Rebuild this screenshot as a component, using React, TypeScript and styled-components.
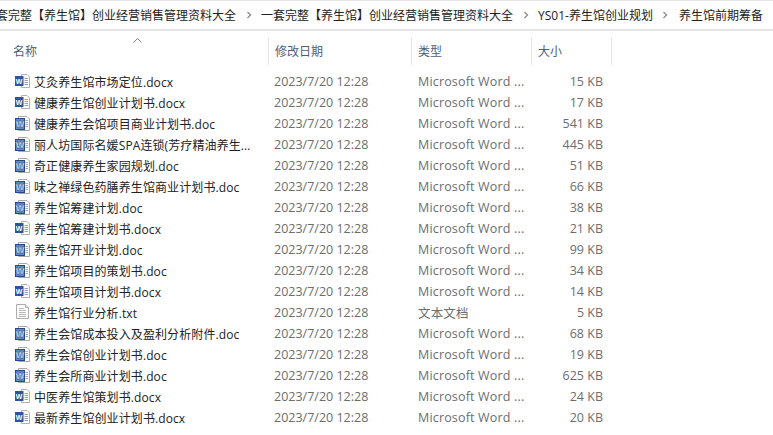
import React from "react";
import styled, { createGlobalStyle } from "styled-components";

const Global = createGlobalStyle`
  html, body { margin: 0; padding: 0; background: #fff; overflow: hidden; }
  body { font-family: "Open Sans", "Noto Sans CJK SC", sans-serif; font-size: 12px; }
`;
const Page = styled.div`
  width: 773px; height: 435px; overflow: hidden; background: #fff; display: flex; flex-direction: column;
`;
const AddressBar = styled.div`
  height: 28px; flex: none; border-top: 1px solid #e6e6e6; border-bottom: 2px solid #e4e4e4;
  display: flex; align-items: center; overflow: hidden; color: #222; white-space: nowrap;
  font-family: "Open Sans", "Noto Sans CJK SC", sans-serif; font-size: 12px;
`;
const Crumb = styled.span<{ $offset?: number }>`
  flex: none; margin-left: ${p => p.$offset ?? 0}px;
`;
const Sep = styled.span`
  flex: none; width: 25px; display: flex; justify-content: center; align-items: center;
`;
const HeaderRow = styled.div`
  display: grid; grid-template-columns: 269px 143px 120px 80px; height: 27px; margin-top: 7px; position: relative; flex: none;
`;
const HeaderCell = styled.div<{ $first?: boolean }>`
  display: flex; align-items: center; padding: 0 0 2px ${p => (p.$first ? 13 : 6)}px;
  border-right: 1px solid #e5e5e5; color: #4c607a; font-family: "Noto Sans CJK SC", sans-serif; font-size: 12px;
`;
const SortCaret = styled.svg`
  position: absolute; left: 133px; top: 0;
`;
const List = styled.div`
  display: flex; flex-direction: column; margin-top: 6px;
`;
const Row = styled.div`
  display: grid; grid-template-columns: 269px 144px 120px 70px; height: 21px; align-items: center; white-space: nowrap; color: #6d6d6d; font-size: 12.5px;
`;
const NameCell = styled.div`
  display: flex; align-items: center; padding-left: 14px; gap: 3px; color: #222; font-size: 12px; letter-spacing: 0.1px; overflow: hidden;
`;
const DateCell = styled.div`
  padding-left: 5px; overflow: hidden;
`;
const TypeCell = styled.div`
  padding-left: 5px; overflow: hidden; letter-spacing: 0.17px;
`;
const SizeCell = styled.div`
  text-align: right;
`;
const FileSvg = styled.svg`
  flex: none;
`;

const DocxIcon = () => (
  <FileSvg width="17" height="17" viewBox="0 0 17 17">
    <path d="M7.5 1.5h5.5l2.5 2.5v10.5h-8z" fill="#fff" stroke="#b0b0b0" />
    <path d="M10.5 5.5h3.5M10.5 7.5h3.5M10.5 9.5h3.5M10.5 11.5h3.5" stroke="#8fa3bf" />
    <rect x="1" y="3" width="8.5" height="10" fill="#2b579a" />
    <text x="5.2" y="10.6" fontSize="7" fontWeight="700" textAnchor="middle" fill="#fff" fontFamily="Liberation Sans, sans-serif">W</text>
  </FileSvg>
);
const DocIcon = () => (
  <FileSvg width="17" height="17" viewBox="0 0 17 17">
    <path d="M4.5 1.5h8.5l2.5 2.5v11.5h-11z" fill="#fff" stroke="#a8a8a8" />
    <path d="M11.5 5.5h2.5M11.5 7.5h2.5M11.5 9.5h2.5M11.5 11.5h2.5" stroke="#a0a8b5" />
    <rect x="1.5" y="3.5" width="9" height="11" fill="#5f87c4" stroke="#234a8c" />
    <text x="6" y="12" fontSize="9" fontWeight="700" textAnchor="middle" fill="#fff" stroke="#163a78" strokeWidth="0.3" fontFamily="Liberation Sans, sans-serif">W</text>
  </FileSvg>
);
const TextIcon = () => (
  <FileSvg width="17" height="17" viewBox="0 0 17 17">
    <path d="M2.5 .5h9l3 3v11h-12z" fill="#fff" stroke="#adadad" />
    <path d="M11.5 .5v3h3" fill="#eee" stroke="#adadad" />
    <path d="M5 4.5h5M5 6.5h7M5 8.5h7M5 10.5h7M5 12.5h7" stroke="#b8b8b8" />
  </FileSvg>
);
const Chevron = () => (
  <svg width="6" height="8" viewBox="0 0 6 8"><path d="M1.5 1l3 3-3 3" fill="none" stroke="#8a8a8a" strokeWidth="1.3" /></svg>
);

const files: [string, string, string?][] = [
  ["艾灸养生馆市场定位.docx", "15 KB"],
  ["健康养生馆创业计划书.docx", "17 KB"],
  ["健康养生会馆项目商业计划书.doc", "541 KB"],
  ["丽人坊国际名媛SPA连锁(芳疗精油养生...", "445 KB"],
  ["奇正健康养生家园规划.doc", "51 KB"],
  ["味之禅绿色药膳养生馆商业计划书.doc", "66 KB"],
  ["养生馆筹建计划.doc", "38 KB"],
  ["养生馆筹建计划书.docx", "21 KB"],
  ["养生馆开业计划.doc", "99 KB"],
  ["养生馆项目的策划书.doc", "34 KB"],
  ["养生馆项目计划书.docx", "14 KB"],
  ["养生馆行业分析.txt", "5 KB", "文本文档"],
  ["养生会馆成本投入及盈利分析附件.doc", "68 KB"],
  ["养生会馆创业计划书.doc", "19 KB"],
  ["养生会所商业计划书.doc", "625 KB"],
  ["中医养生馆策划书.docx", "24 KB"],
  ["最新养生馆创业计划书.docx", "20 KB"],
];

const pickIcon = (name: string) => {
  if (name.endsWith(".txt")) return <TextIcon />;
  if (name.endsWith(".docx")) return <DocxIcon />;
  return <DocIcon />;
};

export default function App() {
  return (
    <Page>
      <Global />
      <AddressBar>
        <Crumb $offset={-16}>一套完整【养生馆】创业经营销售管理资料大全</Crumb>
        <Sep><Chevron /></Sep>
        <Crumb>一套完整【养生馆】创业经营销售管理资料大全</Crumb>
        <Sep><Chevron /></Sep>
        <Crumb>YS01-养生馆创业规划</Crumb>
        <Sep><Chevron /></Sep>
        <Crumb $offset={1}>养生馆前期筹备</Crumb>
      </AddressBar>
      <HeaderRow>
        <SortCaret width="9" height="5" viewBox="0 0 9 5"><path d="M.5 4.5l4-4 4 4" fill="none" stroke="#8a8a8a" /></SortCaret>
        <HeaderCell $first>名称</HeaderCell>
        <HeaderCell>修改日期</HeaderCell>
        <HeaderCell>类型</HeaderCell>
        <HeaderCell>大小</HeaderCell>
      </HeaderRow>
      <List>
        {files.map(([name, size, type]) => (
          <Row key={name}>
            <NameCell>{pickIcon(name)}{name}</NameCell>
            <DateCell>2023/7/20 12:28</DateCell>
            <TypeCell>{type ?? "Microsoft Word ..."}</TypeCell>
            <SizeCell>{size}</SizeCell>
          </Row>
        ))}
      </List>
    </Page>
  );
}
